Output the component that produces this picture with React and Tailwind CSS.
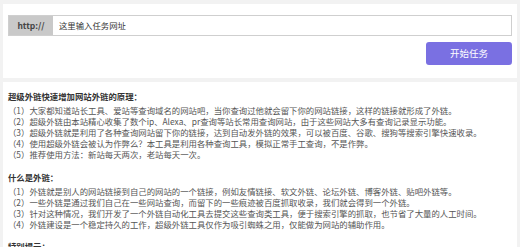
import React from 'react';

const principle = [
  '（1）大家都知道站长工具、爱站等查询域名的网站吧，当你查询过他就会留下你的网站链接，这样的链接就形成了外链。',
  '（2）超级外链由本站精心收集了数个ip、Alexa、pr查询等站长常用查询网站，由于这些网站大多有查询记录显示功能。',
  '（3）超级外链就是利用了各种查询网站留下你的链接，达到自动发外链的效果，可以被百度、谷歌、搜狗等搜索引擎快速收录。',
  '（4）使用超级外链会被认为作弊么？本工具是利用各种查询工具，模拟正常手工查询，不是作弊。',
  '（5）推荐使用方法：新站每天两次，老站每天一次。',
];

const whatIs = [
  '（1）外链就是别人的网站链接到自己的网站的一个链接，例如友情链接、软文外链、论坛外链、博客外链、贴吧外链等。',
  '（2）一些外链是通过我们自己在一些网站查询，而留下的一些痕迹被百度抓取收录，我们就会得到一个外链。',
  '（3）针对这种情况，我们开发了一个外链自动化工具去提交这些查询类工具，便于搜索引擎的抓取，也节省了大量的人工时间。',
  '（4）外链建设是一个稳定持久的工作，超级外链工具仅作为吸引蜘蛛之用，仅能做为网站的辅助作用。',
];

function Section({ title, items, className = '' }) {
  return (
    <div className={className}>
      <h3 className="text-[8.4px] leading-[11px] font-bold text-[#333] mb-[3px]">{title}</h3>
      <ul>
        {items.map((t, i) => (
          <li key={i} className="text-[8.4px] leading-[11px] text-[#555] whitespace-nowrap">
            {t}
          </li>
        ))}
      </ul>
    </div>
  );
}

export default function App() {
  return (
    <div
      className="w-[520px] h-[247px] overflow-hidden bg-[#f2f2f2] pt-[4px] px-[3px]"
      style={{ fontFamily: '"Noto Sans CJK SC", "Noto Sans", sans-serif' }}
    >
      {/* task form */}
      <div className="bg-white h-[74px] px-[5px] pt-[11px]">
        <div className="flex h-[21px] border border-[#cfcfcf]">
          <span className="w-[44px] flex items-center justify-center bg-[#c9c9c9] text-[8.5px] font-bold text-[#444]">
            http://
          </span>
          <input
            className="flex-1 px-[6px] text-[8.4px] text-[#333] placeholder:text-[#333] outline-none"
            placeholder="这里输入任务网址"
          />
        </div>
        <div className="flex justify-end mt-[6px]">
          <button className="w-[86px] h-[23px] rounded-[3px] bg-[#7a70e2] text-white text-[9.5px]">
            开始任务
          </button>
        </div>
      </div>

      {/* explanation */}
      <div className="bg-white mt-[4px] px-[5px] pt-[9px] h-[200px]">
        <Section title="超级外链快速增加网站外链的原理：" items={principle} />
        <Section title="什么是外链：" items={whatIs} className="mt-[12px]" />
        <h3 className="mt-[11px] text-[8.4px] leading-[11px] font-bold text-[#333]">特别提示：</h3>
      </div>
    </div>
  );
}
